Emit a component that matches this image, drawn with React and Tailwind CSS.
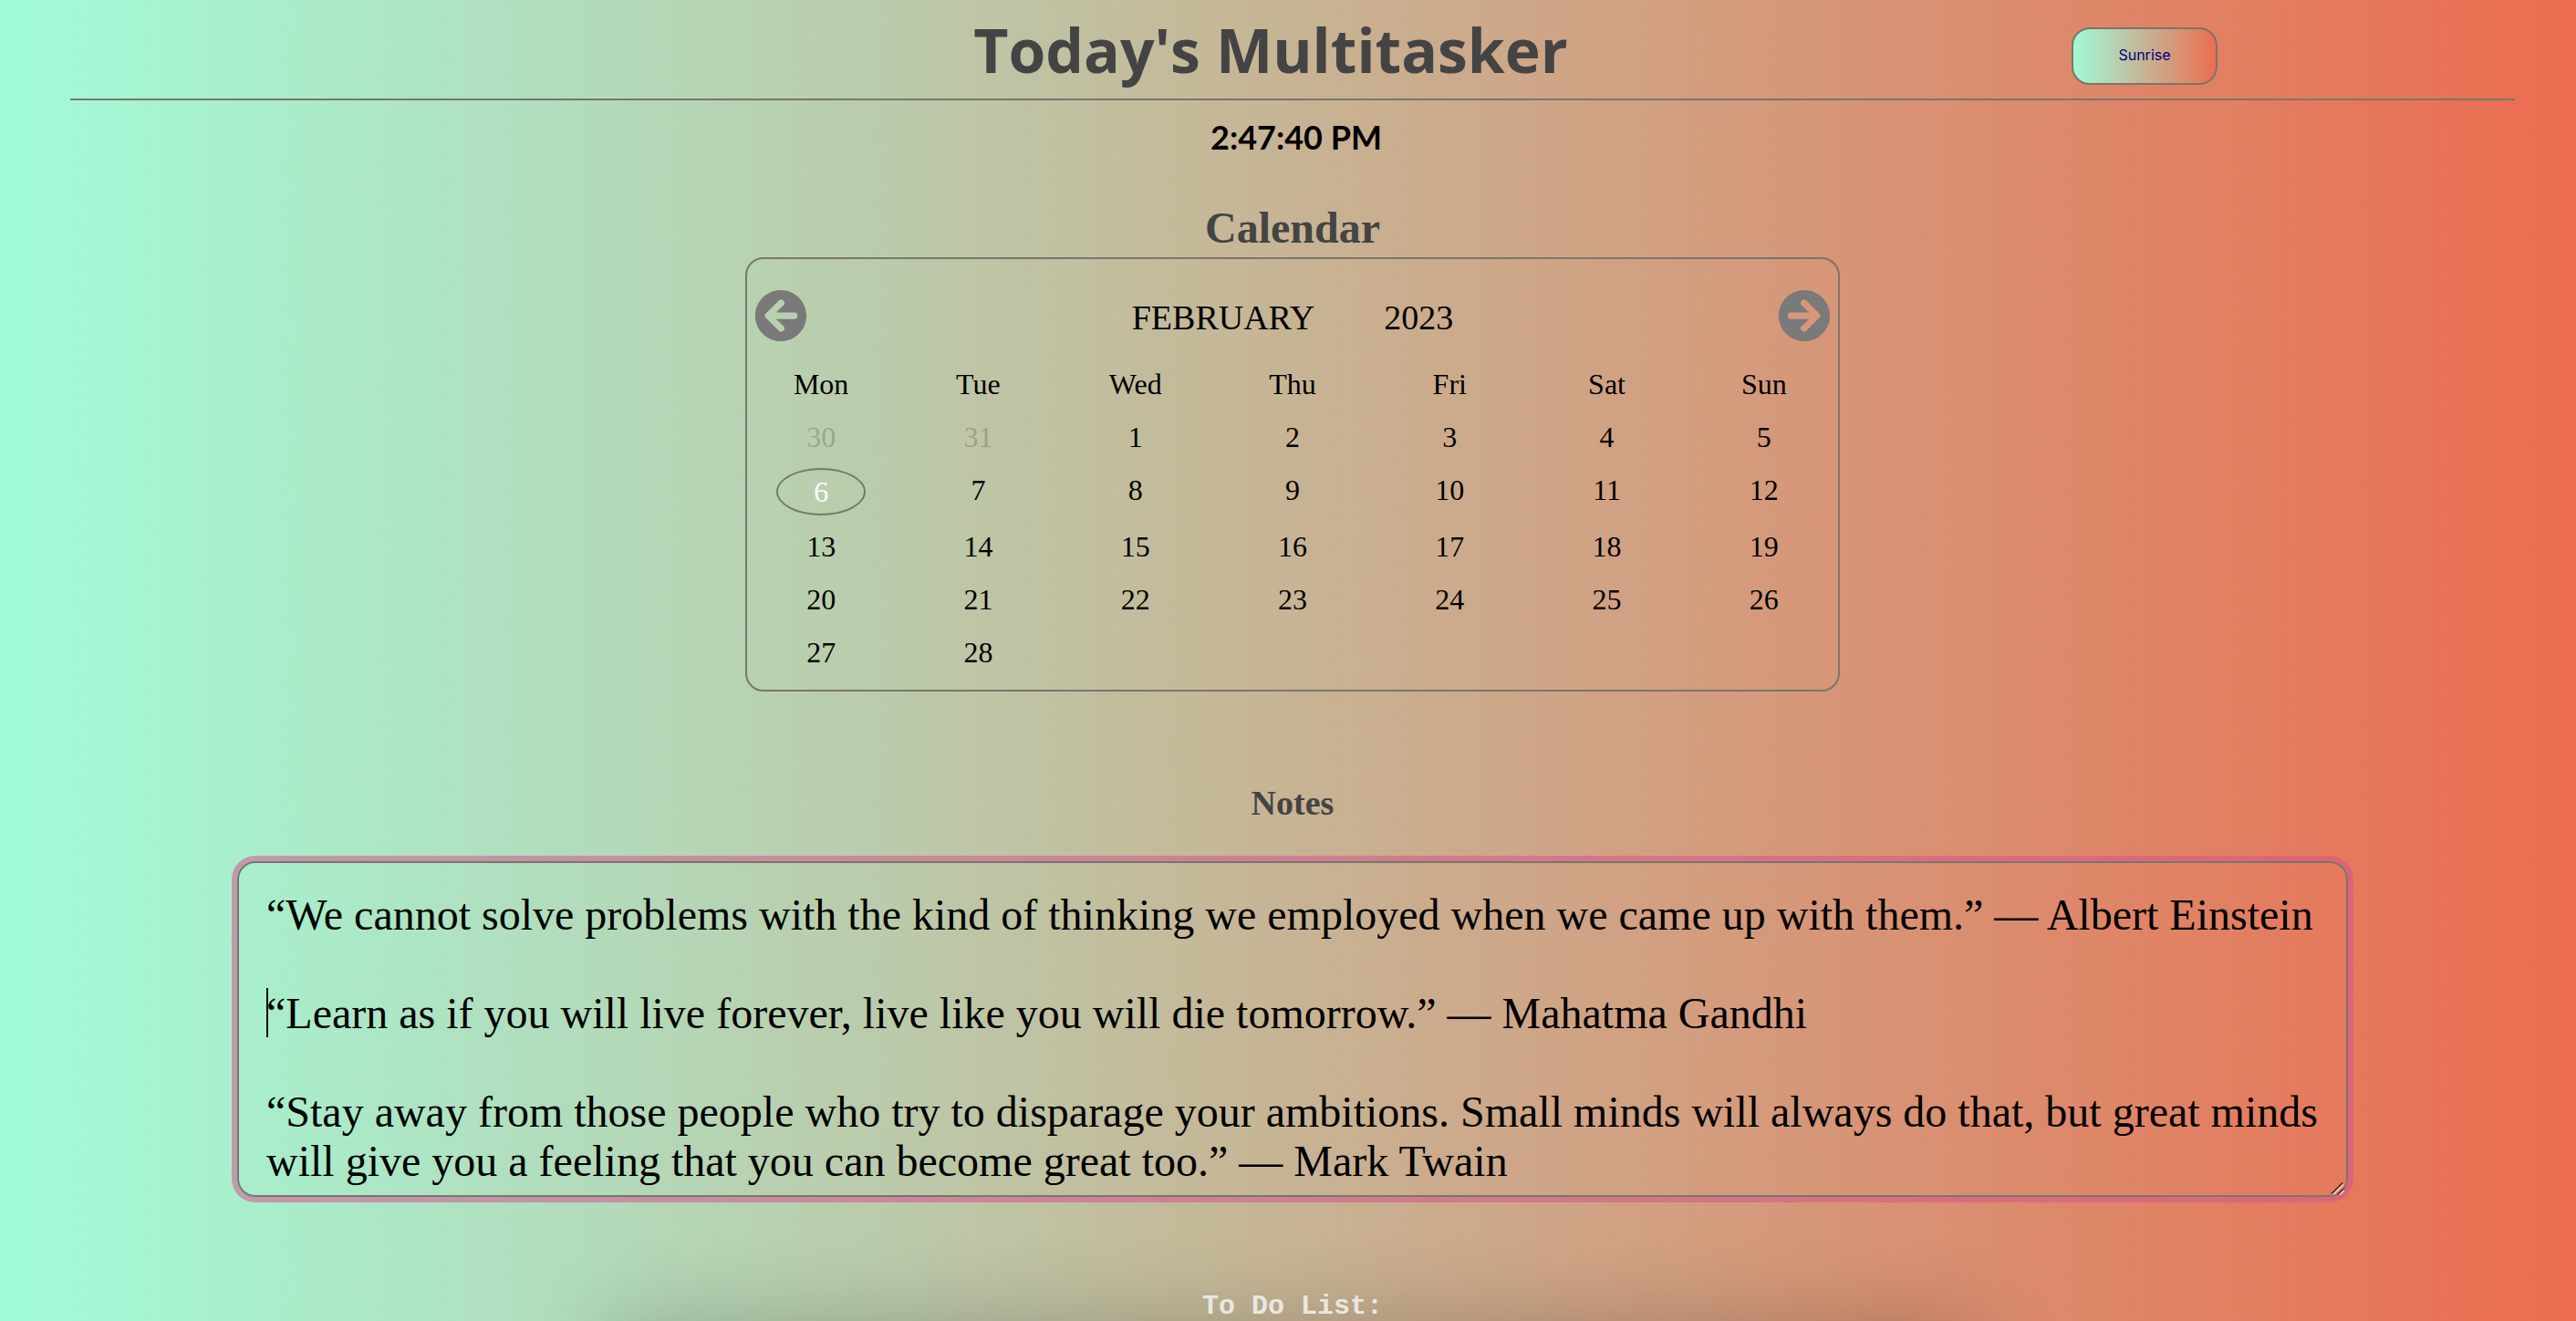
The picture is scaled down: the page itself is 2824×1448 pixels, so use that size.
import { FaArrowCircleLeft, FaArrowCircleRight } from "react-icons/fa";

const DAY_NAMES = ["Mon", "Tue", "Wed", "Thu", "Fri", "Sat", "Sun"];

const WEEKS = [
  [30, 31, 1, 2, 3, 4, 5],
  [6, 7, 8, 9, 10, 11, 12],
  [13, 14, 15, 16, 17, 18, 19],
  [20, 21, 22, 23, 24, 25, 26],
  [27, 28, null, null, null, null, null],
];

const TODAY = 6;

const NOTES = `“We cannot solve problems with the kind of thinking we employed when we came up with them.” — Albert Einstein

“Learn as if you will live forever, live like you will die tomorrow.” — Mahatma Gandhi

“Stay away from those people who try to disparage your ambitions. Small minds will always do that, but great minds will give you a feeling that you can become great too.” — Mark Twain`;

function Header() {
  return (
    <header className="grid h-[110px] grid-cols-[1fr_auto_1fr] items-start border-b-2 border-[#7a766c]">
      <div />
      <h1 className="pt-3 pr-12 font-['Open_Sans',sans-serif] text-[66px] leading-[84px] font-bold text-[#444444]">
        Today's Multitasker
      </h1>
      <div className="flex justify-end pt-[30px] pr-[326px]">
        <button
          type="button"
          className="h-[63px] w-40 rounded-[20px] border-2 border-[#7a766c] bg-linear-to-r/srgb from-[#a1fcda] to-[#ec6c4f] bg-origin-border pb-1 font-['Inter',sans-serif] text-base text-[#000080]"
        >
          Sunrise
        </button>
      </div>
    </header>
  );
}

function DayCell({ day, muted }) {
  if (day === null) return <td />;
  if (day === TODAY && !muted) {
    return (
      <td className="py-[5px] align-top">
        <span className="mx-auto block h-[52px] w-[98px] rounded-[50%] border-2 border-[#747a6e] leading-[48px] text-white">
          {day}
        </span>
      </td>
    );
  }
  return (
    <td className={muted ? "py-[5px] align-top text-black/20" : "py-[5px] align-top"}>{day}</td>
  );
}

function Calendar() {
  return (
    <section className="mx-auto w-full max-w-[1200px]">
      <h2 className="pt-12 text-center text-[48px] leading-[56px] font-bold text-[#444444]">
        Calendar
      </h2>
      <div className="mt-1 rounded-[20px] border-2 border-[#7a766c] pb-3">
        <div className="flex h-[108px] items-center justify-between px-2 pt-5">
          <button type="button" aria-label="Previous month" className="mb-3 pt-2">
            <FaArrowCircleLeft className="size-[58px] text-[#7a7a7a]" />
          </button>
          <div className="flex gap-[76px] text-[38px] leading-[48px]">
            <span>FEBRUARY</span>
            <span>2023</span>
          </div>
          <button type="button" aria-label="Next month" className="mb-3 pt-2">
            <FaArrowCircleRight className="size-[58px] text-[#7a7a7a]" />
          </button>
        </div>
        <div className="-mx-[5px]">
          <table className="w-full table-fixed text-center text-[32px] leading-[48px]">
            <thead>
              <tr>
                {DAY_NAMES.map((name) => (
                  <th key={name} scope="col" className="py-[5px] font-normal">
                    {name}
                  </th>
                ))}
              </tr>
            </thead>
            <tbody>
              {WEEKS.map((week, row) => (
                <tr key={row}>
                  {week.map((day, col) => (
                    <DayCell key={col} day={day} muted={row === 0 && day > 7} />
                  ))}
                </tr>
              ))}
            </tbody>
          </table>
        </div>
      </div>
    </section>
  );
}

function Notes() {
  return (
    <section className="px-[250px] pt-[98px]">
      <h2 className="text-center text-[38px] leading-[48px] font-bold text-[#444444]">
        <label htmlFor="notes">Notes</label>
      </h2>
      <div className="relative mt-10">
        <textarea
          id="notes"
          rows={6}
          defaultValue={NOTES}
          className="block h-[368px] w-full resize-none overflow-hidden rounded-[20px] border-2 border-[#7a766c] bg-transparent pt-[30px] pr-5 pb-2 pl-[30px] text-[48px] leading-[54px] text-black ring-6 ring-[#d6548e]/55 outline-none"
        />
        <span className="absolute top-[139px] left-8 h-[54px] w-0.5 bg-black" />
        <svg
          viewBox="0 0 16 16"
          className="pointer-events-none absolute right-1 bottom-0.5 size-4"
          fill="none"
          strokeWidth="1.6"
        >
          <path d="M2 14.5 14 2.5M9 15 15 9" stroke="#4a2f28" />
          <path d="M4 15.5 15 4.5M11 15.5 15.5 11" stroke="#f6cfc4" />
        </svg>
      </div>
    </section>
  );
}

function TodoList() {
  return (
    <section className="pt-[95px]">
      <h2 className="text-center font-['Liberation_Mono',monospace] text-[30px] leading-[50px] font-bold text-[#e8e8e2]">
        To Do List:
      </h2>
      <div className="mx-auto h-40 w-full max-w-[1500px] shadow-[0_0_100px_rgba(0,0,0,0.24)]" />
    </section>
  );
}

export default function App() {
  return (
    <div className="h-screen overflow-hidden bg-linear-to-r/srgb from-[#a1fcda] to-[#ec6c4f] font-['Liberation_Serif',serif] text-black">
      <div className="pr-[67px] pl-[77px]">
        <Header />
      </div>
      <main className="pl-2.5">
        <p className="pt-4 pl-2 text-center font-['Lato',sans-serif] text-[36px] leading-[48px] font-bold">
          2:47:40 PM
        </p>
        <Calendar />
        <Notes />
        <TodoList />
      </main>
    </div>
  );
}
